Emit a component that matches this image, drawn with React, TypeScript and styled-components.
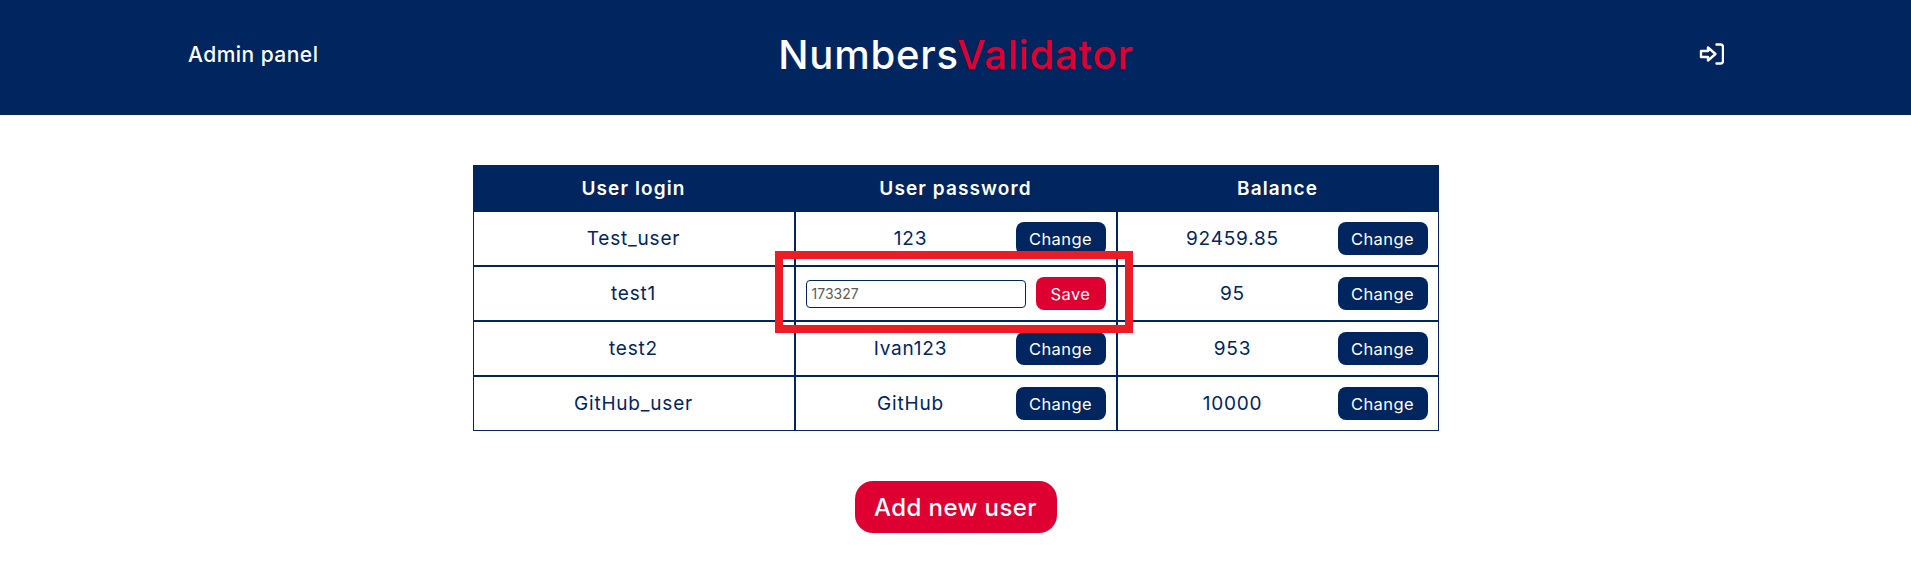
import React from "react";
import styled, { createGlobalStyle } from "styled-components";

const NAVY = "#00255f";
const RED = "#dd0031";
const FONT = `Inter, "Noto Sans", "Liberation Sans", sans-serif`;

const Global = createGlobalStyle`
  html, body { margin: 0; padding: 0; background: #fff; }
  body { font-family: ${FONT}; color: ${NAVY}; }
`;

const Header = styled.header`
  height: 115px;
  padding: 0 187px 0 188px;
  box-sizing: border-box;
  background: ${NAVY};
  display: grid;
  grid-template-columns: 1fr auto 1fr;
  align-items: start;
`;

const PanelTitle = styled.div`
  color: #fff;
  font-size: 21px;
  font-weight: 500;
  line-height: 24px;
  margin-top: 43px;
  letter-spacing: 0.47px;
`;

const Logo = styled.div`
  font-size: 40px;
  font-weight: 500;
  line-height: 48px;
  margin-top: 31px;
  color: #fff;
  letter-spacing: 0.8px;
`;

const LogoAccent = styled.span`
  color: ${RED};
`;

const LoginButton = styled.div`
  justify-self: end;
  margin-top: 42px;
  width: 26px;
  height: 24px;
  color: #fff;
`;

const Main = styled.main`
  padding: 50px 0 46px;
  display: flex;
  flex-direction: column;
  align-items: center;
`;

const TableWrap = styled.div`
  position: relative;
  width: 966px;
`;

const Table = styled.table`
  width: 966px;
  border-collapse: separate;
  border-spacing: 0;
  table-layout: fixed;
`;

const HeadCell = styled.th`
  height: 47px;
  padding: 0;
  box-sizing: border-box;
  background: ${NAVY};
  color: #fff;
  font-size: 19px;
  font-weight: 600;
  letter-spacing: 1.1px;
  text-align: center;
`;

const Cell = styled.td<{ $first?: boolean }>`
  height: ${(p) => (p.$first ? 54 : 55)}px;
  padding: 0;
  box-sizing: border-box;
  border: 1px solid ${NAVY};
  border-top-width: ${(p) => (p.$first ? 0 : 1)}px;
  font-size: 19px;
  font-weight: 400;
  letter-spacing: 0.8px;
  text-align: center;
  color: ${NAVY};
`;

const CellRow = styled.div`
  display: flex;
  align-items: center;
  gap: 10px;
  padding: 0 10px;
`;

const CellValue = styled.span`
  flex: 1;
  text-align: center;
  margin-right: -10px;
`;

const SmallButton = styled.button<{ $red?: boolean }>`
  flex: none;
  width: ${(p) => (p.$red ? 70 : 90)}px;
  height: 33px;
  border: none;
  padding: 0;
  border-radius: 8px;
  background: ${(p) => (p.$red ? RED : NAVY)};
  color: #fff;
  font-family: ${FONT};
  font-size: 16.5px;
  font-weight: 400;
  letter-spacing: 0.4px;
`;

const PasswordInput = styled.input`
  flex: none;
  width: 220px;
  height: 28px;
  box-sizing: border-box;
  border: 1px solid ${NAVY};
  border-radius: 4px;
  padding: 0 5px;
  font-family: ${FONT};
  font-size: 14px;
  color: #5f5a50;
  outline: none;
  background: #fff;
`;

const Highlight = styled.div`
  position: absolute;
  left: 302px;
  top: 86px;
  width: 358px;
  height: 82px;
  box-sizing: border-box;
  border: 8px solid #ed1c24;
  pointer-events: none;
`;

const AddButton = styled.button`
  margin-top: 50px;
  width: 202px;
  height: 52px;
  border: none;
  padding: 0;
  border-radius: 18px;
  background: ${RED};
  color: #fff;
  font-family: ${FONT};
  font-size: 24px;
  font-weight: 500;
  letter-spacing: 0.4px;
`;

const rows: { login: string; password: string; balance: string; editing?: boolean }[] = [
  { login: "Test_user", password: "123", balance: "92459.85" },
  { login: "test1", password: "173327", balance: "95", editing: true },
  { login: "test2", password: "Ivan123", balance: "953" },
  { login: "GitHub_user", password: "GitHub", balance: "10000" },
];

const LoginIcon = () => (
  <svg width="26" height="24" viewBox="0 0 26 24" fill="none" stroke="currentColor" strokeWidth="2.4" strokeLinejoin="round" strokeLinecap="round">
    <path d="M3 9h7V5.5l7.5 6.5-7.5 6.5V15H3z" />
    <path d="M18.5 2.5h4a2.5 2.5 0 0 1 2.5 2.5v14a2.5 2.5 0 0 1-2.5 2.5h-4" />
  </svg>
);

export default function App() {
  return (
    <>
      <Global />
      <Header>
        <PanelTitle>Admin panel</PanelTitle>
        <Logo>
          Numbers<LogoAccent>Validator</LogoAccent>
        </Logo>
        <LoginButton>
          <LoginIcon />
        </LoginButton>
      </Header>
      <Main>
        <TableWrap>
          <Table>
            <thead>
              <tr>
                <HeadCell>User login</HeadCell>
                <HeadCell>User password</HeadCell>
                <HeadCell>Balance</HeadCell>
              </tr>
            </thead>
            <tbody>
              {rows.map((r, i) => (
                <tr key={r.login}>
                  <Cell $first={i === 0}>{r.login}</Cell>
                  <Cell $first={i === 0}>
                    <CellRow>
                      {r.editing ? (
                        <>
                          <PasswordInput readOnly value={r.password} />
                          <SmallButton $red>Save</SmallButton>
                        </>
                      ) : (
                        <>
                          <CellValue>{r.password}</CellValue>
                          <SmallButton>Change</SmallButton>
                        </>
                      )}
                    </CellRow>
                  </Cell>
                  <Cell $first={i === 0}>
                    <CellRow>
                      <CellValue>{r.balance}</CellValue>
                      <SmallButton>Change</SmallButton>
                    </CellRow>
                  </Cell>
                </tr>
              ))}
            </tbody>
          </Table>
          <Highlight />
        </TableWrap>
        <AddButton>Add new user</AddButton>
      </Main>
    </>
  );
}
